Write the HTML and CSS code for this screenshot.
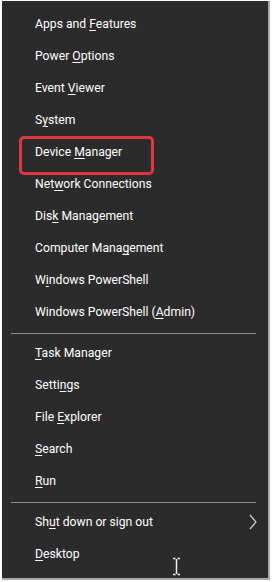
FILE: index.html
```html
<!DOCTYPE html>
<html>
<head>
<meta charset="utf-8">
<link rel="stylesheet" href="styles.css">
</head>
<body>
<div class="frame">
  <nav class="menu">
    <ul class="group">
      <li class="item">Apps and <u>F</u>eatures</li>
      <li class="item">Power <u>O</u>ptions</li>
      <li class="item">Event <u>V</u>iewer</li>
      <li class="item">S<u>y</u>stem</li>
      <li class="item selected">Device <u>M</u>anager</li>
      <li class="item">Net<u>w</u>ork Connections</li>
      <li class="item">Dis<u>k</u> Management</li>
      <li class="item">Computer Mana<u>g</u>ement</li>
      <li class="item">W<u>i</u>ndows PowerShell</li>
      <li class="item">Windows PowerShell (<u>A</u>dmin)</li>
    </ul>
    <div class="sep"></div>
    <ul class="group">
      <li class="item"><u>T</u>ask Manager</li>
      <li class="item">Setti<u>n</u>gs</li>
      <li class="item">File <u>E</u>xplorer</li>
      <li class="item"><u>S</u>earch</li>
      <li class="item"><u>R</u>un</li>
    </ul>
    <div class="sep"></div>
    <ul class="group">
      <li class="item sub">Sh<u>u</u>t down or sign out
        <svg class="chev" width="8" height="16" viewBox="0 0 8 16"><path d="M1 1 L7 8 L1 15" fill="none" stroke="#cfcfcf" stroke-width="1.2"/></svg>
      </li>
      <li class="item"><u>D</u>esktop</li>
    </ul>
    <svg class="cursor" width="9" height="19" viewBox="0 0 9 19"><path d="M1 1.5 H3.5 M5.5 1.5 H8 M4.5 2 V17 M1 17.5 H3.5 M5.5 17.5 H8" fill="none" stroke="#f0f0f0" stroke-width="1.5"/></svg>
  </nav>
</div>
</body>
</html>
```
FILE: styles.css
```css
* { box-sizing: border-box; }
html, body { margin: 0; padding: 0; background: #ffffff; }
.frame {
  width: 272px;
  height: 582px;
  padding: 1px 2px 2px 2px;
}
.menu {
  position: relative;
  width: 268px;
  height: 579px;
  background: #2b2b2b;
  border-right: 2px solid #a8a8a8;
  border-bottom: 2px solid #a8a8a8;
  padding-top: 7px;
  font-family: Roboto, "Open Sans", sans-serif;
  font-size: 12.2px;
  color: #ffffff;
}
.group { list-style: none; margin: 0; padding: 0; }
.item {
  position: relative;
  height: 32px;
  line-height: 32px;
  padding-left: 33px;
  white-space: nowrap;
}
.item u { text-decoration-thickness: 1px; text-underline-offset: 2px; }
.selected::after {
  content: "";
  position: absolute;
  left: 17px;
  top: 0;
  width: 129px;
  height: 33px;
  border: 3px solid #dc3840;
  border-radius: 5px;
}
.sep {
  height: 1px;
  background: #8a8a8a;
  margin: 5px 12px 3px 9px;
}
.chev { position: absolute; right: 11px; top: 8px; }
.cursor { position: absolute; left: 170px; top: 556px; }
```
